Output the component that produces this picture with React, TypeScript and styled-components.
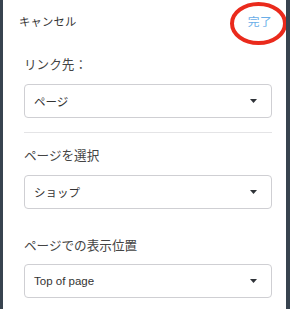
import React from 'react'
import styled, { createGlobalStyle } from 'styled-components'

const GlobalStyle = createGlobalStyle`
  html, body {
    margin: 0;
    padding: 0;
    background: #38434f;
  }
  body {
    font-family: 'Liberation Sans', 'Noto Sans CJK JP', sans-serif;
    -webkit-font-smoothing: antialiased;
  }
`

const Panel = styled.div`
  position: relative;
  margin: 0 4px 0 3px;
  height: 309px;
  background: #ffffff;
  overflow: hidden;
`

const Header = styled.div`
  display: flex;
  justify-content: space-between;
  align-items: center;
  height: 41px;
  padding: 0 14px 0 16px;
  font-size: 11.3px;
`

const CancelButton = styled.span`
  color: #333333;
  letter-spacing: 0.2px;
`

const DoneButton = styled.span`
  color: #6aaee8;
  font-size: 11.8px;
  letter-spacing: 0.3px;
`

const Content = styled.div`
  display: flex;
  flex-direction: column;
  padding: 0 14px 0 21px;
`

const Field = styled.div<{ $gap: number; $top: number }>`
  display: flex;
  flex-direction: column;
  gap: ${p => p.$gap}px;
  margin-top: ${p => p.$top}px;
`

const Label = styled.div`
  height: 18px;
  line-height: 18px;
  font-size: 12.6px;
  color: #444444;
`

const Select = styled.div`
  display: flex;
  align-items: center;
  justify-content: space-between;
  box-sizing: border-box;
  height: 34px;
  padding: 0 14px 0 9px;
  border: 1px solid #cfcfd3;
  border-radius: 4px;
  font-size: 11.5px;
  color: #333333;
`

const Divider = styled.hr`
  margin: 14px 0 0;
  border: 0;
  border-top: 1px solid #e4e4e6;
`

const Circle = styled.svg`
  position: absolute;
  left: 224px;
  top: 0;
`

function Caret() {
  return (
    <svg width="7" height="4" viewBox="0 0 7 4">
      <polygon points="0,0 7,0 3.5,4" fill="#2f3338" />
    </svg>
  )
}

export default function App() {
  return (
    <>
      <GlobalStyle />
      <Panel>
        <Header>
          <CancelButton>キャンセル</CancelButton>
          <DoneButton>完了</DoneButton>
        </Header>
        <Content>
          <Field $gap={10} $top={15}>
            <Label>リンク先：</Label>
            <Select>
              <span>ページ</span>
              <Caret />
            </Select>
          </Field>
          <Divider />
          <Field $gap={10} $top={14}>
            <Label>ページを選択</Label>
            <Select>
              <span>ショップ</span>
              <Caret />
            </Select>
          </Field>
          <Field $gap={9} $top={28}>
            <Label>ページでの表示位置</Label>
            <Select>
              <span>Top of page</span>
              <Caret />
            </Select>
          </Field>
        </Content>
        <Circle width="62" height="48" viewBox="0 0 62 48">
          <ellipse cx="31.5" cy="23.5" rx="26.5" ry="19.5" fill="none" stroke="#ea2a1c" strokeWidth="4" />
        </Circle>
      </Panel>
    </>
  )
}
